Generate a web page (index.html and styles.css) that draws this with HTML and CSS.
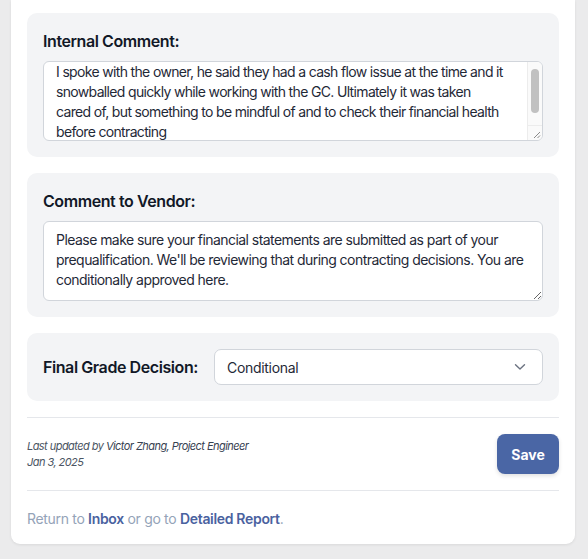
FILE: index.html
```html
<!DOCTYPE html>
<html lang="en">
<head>
<meta charset="utf-8">
<title>Review</title>
<link rel="stylesheet" href="styles.css">
</head>
<body>
<div class="page">
  <div class="card">
    <section class="panel">
      <label class="panel-label" for="internal">Internal Comment:</label>
      <div class="field-box">
        <textarea id="internal" class="field-inner">I spoke with the owner, he said they had a cash flow issue at the time and it snowballed quickly while working with the GC. Ultimately it was taken cared of, but something to be mindful of and to check their financial health before contracting</textarea>
        <div class="vscroll" aria-hidden="true">
          <div class="vscroll-thumb"></div>
          <div class="vscroll-corner">
            <svg width="14" height="14" viewBox="0 0 14 14"><path d="M12 6 L6 12 M12 9.5 L9.5 12" stroke="#8a8a8a" stroke-width="1" fill="none"/></svg>
          </div>
        </div>
      </div>
    </section>
    <section class="panel">
      <label class="panel-label" for="vendor">Comment to Vendor:</label>
      <textarea id="vendor" class="field">Please make sure your financial statements are submitted as part of your prequalification. We'll be reviewing that during contracting decisions. You are conditionally approved here.</textarea>
    </section>
    <section class="panel panel-row">
      <label class="panel-label" for="grade">Final Grade Decision:</label>
      <div class="select-wrap">
        <select id="grade" class="select">
          <option>Conditional</option>
          <option>Approved</option>
          <option>Rejected</option>
        </select>
        <svg class="chevron" width="12" height="8" viewBox="0 0 12 8" aria-hidden="true"><path d="M1.5 1.8 L6 6 L10.5 1.8" fill="none" stroke="#6b7280" stroke-width="1.4" stroke-linecap="round" stroke-linejoin="round"/></svg>
      </div>
    </section>
    <hr class="divider">
    <div class="meta-row">
      <div class="meta">
        <div>Last updated by <span class="meta-name">Victor Zhang, Project Engineer</span></div>
        <div>Jan 3, 2025</div>
      </div>
      <button class="btn-save" type="button">Save</button>
    </div>
    <hr class="divider">
    <p class="footer-links">Return to <a href="#">Inbox</a> or go to <a href="#">Detailed Report</a>.</p>
  </div>
</div>
<script src="script.js"></script>
</body>
</html>
```
FILE: styles.css
```css
* { box-sizing: border-box; }
html, body { margin: 0; padding: 0; }
body {
  background: #ebebec;
  font-family: Inter, "Noto Sans", sans-serif;
  color: #111827;
}
.page {
  padding: 0 13px 16px 11px;
}
.card {
  background: #ffffff;
  border-radius: 0 0 9px 9px;
  box-shadow: 0 1px 3px rgba(0,0,0,0.08);
  padding: 13px 16px 13px;
}
.panel {
  background: #f3f4f6;
  border-radius: 10px;
  padding: 16px;
  margin-bottom: 16px;
}
.panel-label {
  display: block;
  font-size: 16px;
  font-weight: 600;
  line-height: 24px;
  letter-spacing: -0.42px;
  margin-bottom: 8px;
  color: #111827;
}
.field,
.field-inner {
  font-family: Inter, "Noto Sans", sans-serif;
  font-size: 14px;
  line-height: 20px;
  color: #1f2937;
}
.field {
  display: block;
  width: 100%;
  height: 80px;
  margin: 0;
  padding: 8px 12px;
  border: 1px solid #d1d5db;
  border-radius: 6px;
  background: #ffffff;
  letter-spacing: -0.55px;
  resize: vertical;
}
.field-box {
  display: flex;
  height: 80px;
  border: 1px solid #d1d5db;
  border-radius: 6px;
  background: #ffffff;
  overflow: hidden;
}
.field-inner {
  flex: 1;
  min-width: 0;
  margin: 0;
  padding: 8px 20px 8px 12px;
  border: 0;
  background: transparent;
  letter-spacing: -0.66px;
  resize: none;
  outline: none;
  scrollbar-width: none;
}
.vscroll {
  width: 15px;
  flex: none;
  display: flex;
  flex-direction: column;
  background: #fafafa;
  border-left: 1px solid #ececec;
  padding-top: 7px;
}
.vscroll-thumb {
  width: 8px;
  height: 44px;
  margin-left: 3px;
  border-radius: 4px;
  background: #c1c1c1;
}
.vscroll-corner {
  margin-top: auto;
  height: 15px;
  border-top: 1px solid #ececec;
  display: flex;
  align-items: flex-end;
  justify-content: flex-end;
}
.vscroll-corner svg { display: block; }
.panel-row {
  display: flex;
  align-items: center;
  gap: 16px;
}
.panel-row .panel-label {
  margin-bottom: 0;
  white-space: nowrap;
}
.select-wrap {
  position: relative;
  flex: 1;
}
.select {
  display: block;
  width: 100%;
  height: 36px;
  padding: 0 32px 0 12px;
  border: 1px solid #d1d5db;
  border-radius: 7px;
  background: #ffffff;
  appearance: none;
  -webkit-appearance: none;
  font-family: Inter, "Noto Sans", sans-serif;
  font-size: 14px;
  letter-spacing: -0.3px;
  color: #1f2937;
}
.chevron {
  position: absolute;
  right: 17px;
  top: 14px;
  pointer-events: none;
}
.divider {
  border: 0;
  border-top: 1px solid #e5e7eb;
  margin: 0;
}
.meta-row {
  display: flex;
  justify-content: space-between;
  align-items: center;
  padding: 16px 0;
}
.meta {
  font-size: 11px;
  line-height: 16px;
  font-style: italic;
  color: #4b5563;
  letter-spacing: -0.55px;
}
.meta-name { color: #374151; }
.btn-save {
  width: 62px;
  height: 40px;
  border: 0;
  border-radius: 8px;
  background: #4a66a5;
  color: #ffffff;
  font-family: Inter, "Noto Sans", sans-serif;
  font-size: 14px;
  font-weight: 700;
  box-shadow: 0 2px 4px rgba(0,0,0,0.12);
}
.footer-links {
  margin: 16px 0 0;
  font-size: 14px;
  line-height: 24px;
  letter-spacing: -0.32px;
  color: #94a3b8;
}
.footer-links a {
  color: #4a62a0;
  font-weight: 600;
  text-decoration: none;
}
```
FILE: script.js
```js
document.getElementById('internal').scrollTop = 8;
```
